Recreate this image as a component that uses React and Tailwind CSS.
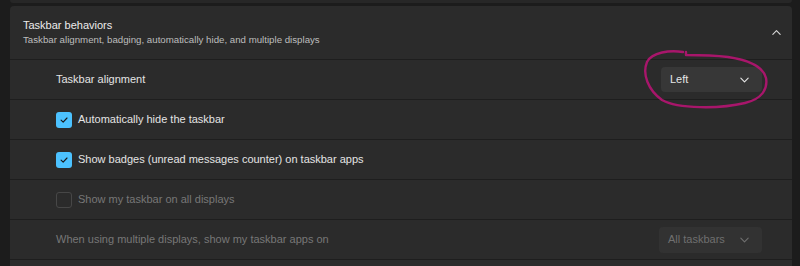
import React from 'react';

const Chevron = ({ up = false, className = '' }) => (
    <svg viewBox="0 0 12 12" className={className} fill="none" stroke="currentColor" strokeWidth="1.2" strokeLinecap="round" strokeLinejoin="round">
        {up ? <path d="M2 8 L6 4 L10 8" /> : <path d="M2 4.5 L6 8.5 L10 4.5" />}
    </svg>
);

const Checkbox = ({ checked }) => (
    <span
        className={
            checked
                ? 'w-[16px] h-[16px] rounded-[3px] bg-[#4cc2ff] flex items-center justify-center shrink-0'
                : 'w-[16px] h-[16px] rounded-[3px] border border-[#474747] shrink-0'
        }
    >
        {checked && (
            <svg viewBox="0 0 12 12" className="w-[10px] h-[10px]" fill="none" stroke="#1a1a1a" strokeWidth="1.4" strokeLinecap="round" strokeLinejoin="round">
                <path d="M2.5 6.2 L5 8.6 L9.6 3.6" />
            </svg>
        )}
    </span>
);

const Dropdown = ({ label, disabled }) => (
    <div
        className={
            disabled
                ? 'w-[103px] h-[26px] rounded-[4px] bg-[#323232] flex items-center justify-between pl-[9px] pr-[12px] text-[#6f6f6f]'
                : 'w-[101px] h-[25px] rounded-[4px] bg-[#373737] flex items-center justify-between pl-[9px] pr-[12px] text-[#e6e6e6]'
        }
    >
        <span className="text-[11px]">{label}</span>
        <Chevron className="w-[11px] h-[11px]" />
    </div>
);

const Row = ({ children, right }) => (
    <div className="h-[40px] border-t border-[#1e1e1e] flex items-center justify-between pl-[46px] pr-[30px]">
        <div className="flex items-center gap-[6px]">{children}</div>
        {right}
    </div>
);

export default function App() {
    return (
        <div className="relative w-[800px] h-[266px] overflow-hidden bg-[#1c1c1c] text-[#e4e4e4]" style={{ fontFamily: '"Segoe UI", "Liberation Sans", Arial, sans-serif' }}>
            <div className="ml-[10px] mr-[8px] h-[3px] bg-[#272727] rounded-b-[4px]" />
            <div className="ml-[10px] mr-[8px] mt-[3px] bg-[#2b2b2b] rounded-t-[4px]">
                {/* header */}
                <div className="h-[53px] flex items-center justify-between pl-[13px] pr-[10px]">
                    <div className="leading-[1.25]">
                        <div className="text-[11px] text-[#ececec]">Taskbar behaviors</div>
                        <div className="mt-[2px] text-[9.7px] text-[#bdbdbd]">Taskbar alignment, badging, automatically hide, and multiple displays</div>
                    </div>
                    <Chevron up className="w-[11px] h-[11px] text-[#d8d8d8]" />
                </div>

                <Row right={<Dropdown label="Left" />}>
                    <span className="text-[11px]">Taskbar alignment</span>
                </Row>
                <Row>
                    <Checkbox checked />
                    <span className="text-[11px]">Automatically hide the taskbar</span>
                </Row>
                <Row>
                    <Checkbox checked />
                    <span className="text-[11px]">Show badges (unread messages counter) on taskbar apps</span>
                </Row>
                <Row>
                    <Checkbox />
                    <span className="text-[11px] text-[#777777]">Show my taskbar on all displays</span>
                </Row>
                <Row right={<Dropdown label="All taskbars" disabled />}>
                    <span className="text-[11px] text-[#777777]">When using multiple displays, show my taskbar apps on</span>
                </Row>
                <div className="h-[10px] border-t border-[#1e1e1e]" />
            </div>

            {/* hand-drawn annotation */}
            <svg className="absolute left-[640px] top-[46px] w-[135px] h-[66px] pointer-events-none" viewBox="0 0 135 66" fill="none">
                <path
                    d="M43 6 C30 4 12 6 7 16 C2 28 8 44 22 54 C38 63 80 63 105 57 C122 53 128 43 126 32 C123 20 108 14 88 11 C72 9 58 9 46 9 L46 6"
                    stroke="#a8166b"
                    strokeWidth="2.4"
                    strokeLinecap="round"
                    strokeLinejoin="round"
                />
            </svg>
        </div>
    );
}
